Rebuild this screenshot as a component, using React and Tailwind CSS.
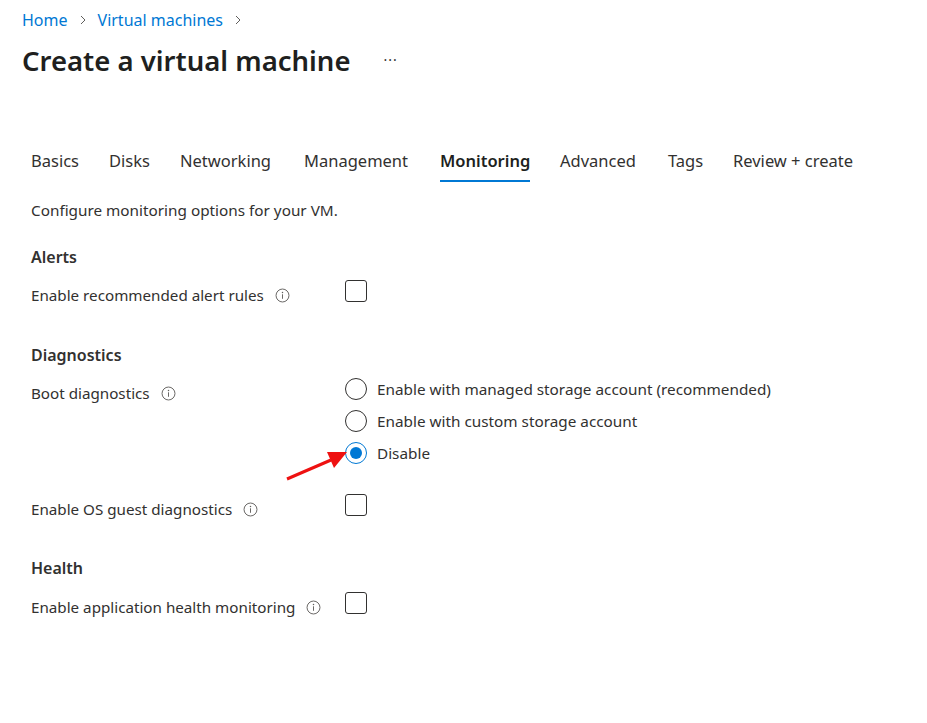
import React from "react";

const font = { fontFamily: '"Segoe UI", "Noto Sans", "Open Sans", sans-serif' };

function Info() {
  return (
    <svg width="15" height="15" viewBox="0 0 16 16" className="shrink-0">
      <circle cx="8" cy="8" r="6.9" fill="none" stroke="#605e5c" strokeWidth="1" />
      <circle cx="8" cy="4.9" r="0.8" fill="#605e5c" />
      <rect x="7.5" y="6.7" width="1" height="4.8" fill="#605e5c" />
    </svg>
  );
}

function Checkbox() {
  return <div className="w-[22px] h-[22px] rounded-[3px] border border-[#323130] bg-white shrink-0" />;
}

function Radio({ checked }) {
  return (
    <div
      className={
        "w-[22px] h-[22px] rounded-full border flex items-center justify-center bg-white shrink-0 " +
        (checked ? "border-[#0078d4]" : "border-[#323130]")
      }
    >
      {checked && <div className="w-[12px] h-[12px] rounded-full bg-[#0078d4]" />}
    </div>
  );
}

function Label({ text }) {
  return (
    <div className="w-[314px] pt-[5px] shrink-0">
      <div className="h-[20px] flex items-center gap-[11px] text-[15.2px] leading-[20px] text-[#323130]">
        <span>{text}</span>
        <Info />
      </div>
    </div>
  );
}

const tabs = [
  ["Basics", "w-[78px]"],
  ["Disks", "w-[71px]"],
  ["Networking", "w-[124px]"],
  ["Management", "w-[136px]"],
  ["Monitoring", "w-[120px]"],
  ["Advanced", "w-[108px]"],
  ["Tags", "w-[65px]"],
  ["Review + create", ""],
];

function Chevron() {
  return (
    <svg width="10" height="12" viewBox="0 0 10 12">
      <path d="M3 2l4 4-4 4" fill="none" stroke="#605e5c" strokeWidth="1" />
    </svg>
  );
}

export default function App() {
  return (
    <div className="w-[927px] h-[723px] bg-white text-[#323130] relative overflow-hidden" style={font}>
      <div className="pl-[22px] pt-[8px] flex items-center gap-[10px] text-[16px] text-[#0078d4] h-[32px]">
        <span>Home</span>
        <Chevron />
        <span>Virtual machines</span>
        <Chevron />
      </div>
      <div className="pl-[22px] mt-[9px] flex items-center h-[40px]">
        <h1 className="text-[27.5px] font-semibold text-[#201f1e] leading-none">Create a virtual machine</h1>
        <span className="ml-[33px] text-[14px] text-[#323130] tracking-[1px] -mt-[4px]">···</span>
      </div>
      <div className="pl-[31px] mt-[68px] flex items-start text-[16.5px]">
        {tabs.map(([t, w]) => (
          <div key={t} className={w + " shrink-0"}>
            <div className="inline-flex flex-col">
              <span
                className={
                  "leading-[24px] whitespace-nowrap " +
                  (t === "Monitoring" ? "font-semibold text-[#201f1e]" : "text-[#323130]")
                }
              >
                {t}
              </span>
              <div className={"mt-[7px] h-[2px] " + (t === "Monitoring" ? "bg-[#0078d4]" : "")} />
            </div>
          </div>
        ))}
      </div>
      <div className="pl-[31px] mt-[18px] text-[15.3px] leading-[20px] text-[#323130]">
        Configure monitoring options for your VM.
      </div>

      <div className="pl-[31px]">
        <div className="mt-[26px] text-[16px] font-semibold leading-[22px] text-[#323130]">Alerts</div>
        <div className="mt-[12px] flex items-start">
          <Label text="Enable recommended alert rules" />
          <Checkbox />
        </div>

        <div className="mt-[39px] text-[16px] font-semibold leading-[22px] text-[#323130]">Diagnostics</div>
        <div className="mt-[12px] flex items-start">
          <Label text="Boot diagnostics" />
          <div className="flex flex-col gap-[10px]">
            {[
              ["Enable with managed storage account (recommended)", false],
              ["Enable with custom storage account", false],
              ["Disable", true],
            ].map(([t, c]) => (
              <div key={t} className="flex items-center gap-[10px] h-[22px]">
                <Radio checked={c} />
                <span className="text-[15.3px] text-[#323130] whitespace-nowrap">{t}</span>
              </div>
            ))}
          </div>
        </div>
        <div className="mt-[30px] flex items-start">
          <Label text="Enable OS guest diagnostics" />
          <Checkbox />
        </div>

        <div className="mt-[38px] text-[16px] font-semibold leading-[22px] text-[#323130]">Health</div>
        <div className="mt-[13px] flex items-start">
          <Label text="Enable application health monitoring" />
          <Checkbox />
        </div>
      </div>

      <svg className="absolute left-0 top-0 pointer-events-none" width="927" height="723">
        <line x1="287" y1="479" x2="331" y2="460" stroke="#ee1111" strokeWidth="3" />
        <polygon points="347,452 327,452 334,468" fill="#ee1111" />
      </svg>
    </div>
  );
}
